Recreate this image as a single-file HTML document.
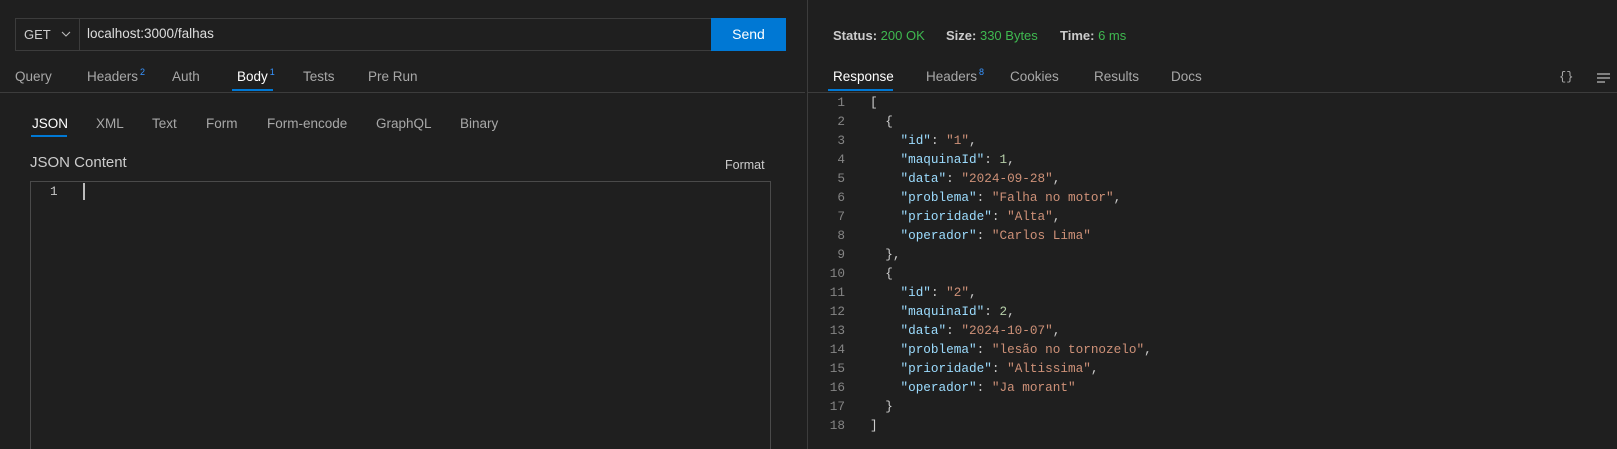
<!DOCTYPE html>
<html style="overflow:hidden;width:1617px;height:449px"><head><meta charset="utf-8"><style>
*{margin:0;padding:0;box-sizing:border-box}
body{width:1617px;height:449px;background:#1f1f1f;font-family:"Liberation Sans",sans-serif;color:#cccccc;position:relative;overflow:hidden;font-size:13.5px}
.a{position:absolute;white-space:nowrap}
.t{color:#a8a8a8}
sup{font-size:9px;color:#3794ff;position:relative;top:-2px;margin-left:2px;vertical-align:top}
.mono{font-family:"Liberation Mono",monospace;font-size:12.7px}
.k{color:#9cdcfe}.s{color:#ce9178}.n{color:#b5cea8}.p{color:#cccccc}
.ln{color:#858585;text-align:right;width:30px}
.g{color:#3fb950}
</style></head><body>
<div class="a" style="left:15px;top:18px;width:771px;height:33px;border:1px solid #3c3c3c;background:#1f1f1f"></div>
<div class="a" style="left:79px;top:19px;width:1px;height:31px;background:#3c3c3c"></div>
<div class="a" style="left:24px;top:27px;font-size:13px;color:#ccc">GET</div>
<svg class="a" style="left:61px;top:31px" width="10" height="7"><path d="M1 1 L5 5 L9 1" stroke="#bbb" fill="none" stroke-width="1.1"/></svg>
<div class="a" style="left:87px;top:26px;font-size:13.5px;color:#ddd">localhost:3000/falhas</div>
<div class="a" style="left:711px;top:18px;width:75px;height:33px;background:#0078d4;color:#fff;font-size:14px;text-align:center;line-height:33px">Send</div>
<div class="a t" style="left:15px;top:69px">Query</div>
<div class="a t" style="left:87px;top:69px">Headers<sup>2</sup></div>
<div class="a t" style="left:172px;top:69px">Auth</div>
<div class="a" style="left:237px;top:69px;color:#fff">Body<sup>1</sup></div>
<div class="a t" style="left:303px;top:69px">Tests</div>
<div class="a t" style="left:368px;top:69px">Pre Run</div>
<div class="a" style="left:232px;top:89px;width:41px;height:2px;background:#0078d4"></div>
<div class="a" style="left:0;top:92px;width:805px;height:1px;background:#3c3c3c"></div>
<div class="a" style="left:32px;top:116px;color:#fff">JSON</div>
<div class="a t" style="left:96px;top:116px">XML</div>
<div class="a t" style="left:152px;top:116px">Text</div>
<div class="a t" style="left:206px;top:116px">Form</div>
<div class="a t" style="left:267px;top:116px">Form-encode</div>
<div class="a t" style="left:376px;top:116px">GraphQL</div>
<div class="a t" style="left:460px;top:116px">Binary</div>
<div class="a" style="left:31px;top:135px;width:36px;height:2px;background:#0078d4"></div>
<div class="a" style="left:30px;top:154px;font-size:15px;color:#ccc">JSON Content</div>
<div class="a" style="left:725px;top:158px;font-size:12.5px;color:#ccc">Format</div>
<div class="a" style="left:30px;top:181px;width:741px;height:268px;border:1px solid #4a4a4a;border-bottom:none"></div>
<div class="a mono" style="left:50px;top:184px;color:#c6c6c6">1</div>
<div class="a" style="left:83px;top:183px;width:1.5px;height:17px;background:#bbb"></div>
<div class="a" style="left:807px;top:0;width:1px;height:449px;background:#3c3c3c"></div>
<div class="a" style="left:833px;top:28px;font-size:13px;font-weight:bold;color:#ccc">Status: <span class="g" style="font-weight:normal">200 OK</span></div>
<div class="a" style="left:946px;top:28px;font-size:13px;font-weight:bold;color:#ccc">Size: <span class="g" style="font-weight:normal">330 Bytes</span></div>
<div class="a" style="left:1060px;top:28px;font-size:13px;font-weight:bold;color:#ccc">Time: <span class="g" style="font-weight:normal">6 ms</span></div>
<div class="a" style="left:833px;top:69px;color:#fff">Response</div>
<div class="a t" style="left:926px;top:69px">Headers<sup>8</sup></div>
<div class="a t" style="left:1010px;top:69px">Cookies</div>
<div class="a t" style="left:1094px;top:69px">Results</div>
<div class="a t" style="left:1171px;top:69px">Docs</div>
<div class="a" style="left:828px;top:89px;width:65px;height:2px;background:#0078d4"></div>
<div class="a" style="left:808px;top:92px;width:809px;height:1px;background:#3c3c3c"></div>
<div class="a mono" style="left:1559px;top:70px;color:#aaa;font-size:12px">{}</div>
<svg class="a" style="left:1596px;top:72px" width="16" height="12"><path d="M1 2H14M1 6H14M1 10H9" stroke="#bbb" stroke-width="1.2"/></svg>
<div class="a mono" style="left:815px;top:93px;line-height:19px">
<div style="display:flex"><div class="ln">1</div><div style="margin-left:25px;white-space:pre"><span class="p">[</span>
<span class="p">  {</span>
    <span class="k">"id"</span><span class="p">: </span><span class="s">"1"</span><span class="p">,</span>
    <span class="k">"maquinaId"</span><span class="p">: </span><span class="n">1</span><span class="p">,</span>
    <span class="k">"data"</span><span class="p">: </span><span class="s">"2024-09-28"</span><span class="p">,</span>
    <span class="k">"problema"</span><span class="p">: </span><span class="s">"Falha no motor"</span><span class="p">,</span>
    <span class="k">"prioridade"</span><span class="p">: </span><span class="s">"Alta"</span><span class="p">,</span>
    <span class="k">"operador"</span><span class="p">: </span><span class="s">"Carlos Lima"</span>
<span class="p">  },</span>
<span class="p">  {</span>
    <span class="k">"id"</span><span class="p">: </span><span class="s">"2"</span><span class="p">,</span>
    <span class="k">"maquinaId"</span><span class="p">: </span><span class="n">2</span><span class="p">,</span>
    <span class="k">"data"</span><span class="p">: </span><span class="s">"2024-10-07"</span><span class="p">,</span>
    <span class="k">"problema"</span><span class="p">: </span><span class="s">"lesão no tornozelo"</span><span class="p">,</span>
    <span class="k">"prioridade"</span><span class="p">: </span><span class="s">"Altissima"</span><span class="p">,</span>
    <span class="k">"operador"</span><span class="p">: </span><span class="s">"Ja morant"</span>
<span class="p">  }</span>
<span class="p">]</span></div></div>
</div>
<div class="a mono ln" style="left:815px;top:93px;line-height:19px;white-space:pre;background:#1f1f1f">1
2
3
4
5
6
7
8
9
10
11
12
13
14
15
16
17
18</div>
</body></html>
